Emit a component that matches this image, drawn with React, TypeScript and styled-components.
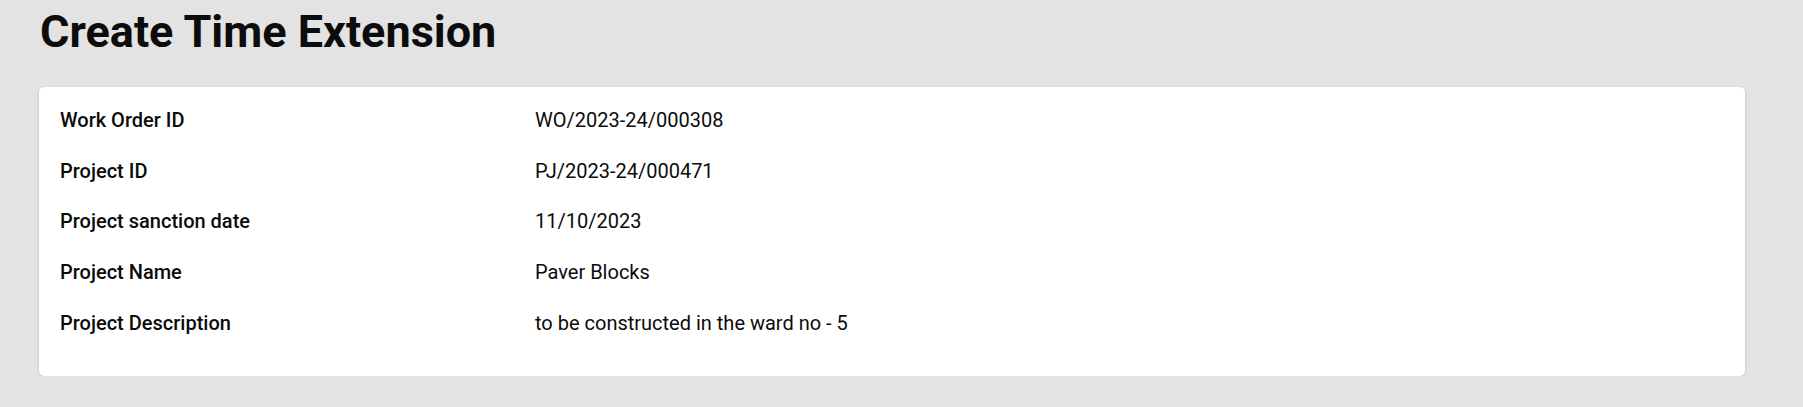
import React from "react";
import styled, { createGlobalStyle } from "styled-components";

const GlobalStyle = createGlobalStyle`
  html, body { margin: 0; padding: 0; }
  body {
    background: #e3e3e3;
    font-family: Roboto, "Noto Sans", Arial, sans-serif;
    color: #0b0b0b;
  }
`;

const Page = styled.div`
  padding: 0 58px 0 39px;
  display: flex;
  flex-direction: column;
`;

const Title = styled.h1`
  margin: 0;
  padding: 2px 0 0 1px;
  font-size: 45px;
  line-height: 60px;
  font-weight: 700;
  color: #0c0c0c;
`;

const Card = styled.section`
  margin-top: 25px;
  background: #ffffff;
  border-radius: 5px;
  box-shadow: 0 1px 3px rgba(0, 0, 0, 0.16);
  padding: 8px 21px 28px;
  display: flex;
  flex-direction: column;
`;

const Row = styled.div`
  display: grid;
  grid-template-columns: 475px 1fr;
  align-items: center;
  height: 50.6px;
`;

const Label = styled.div`
  font-size: 20px;
  font-weight: 500;
`;

const Value = styled.div`
  font-size: 20px;
  font-weight: 400;
`;

const rows: [string, string][] = [
  ["Work Order ID", "WO/2023-24/000308"],
  ["Project ID", "PJ/2023-24/000471"],
  ["Project sanction date", "11/10/2023"],
  ["Project Name", "Paver Blocks"],
  ["Project Description", "to be constructed in the ward no - 5"],
];

export default function App() {
  return (
    <>
      <GlobalStyle />
      <Page>
        <Title>Create Time Extension</Title>
        <Card>
          {rows.map(([l, v]) => (
            <Row key={l}>
              <Label>{l}</Label>
              <Value>{v}</Value>
            </Row>
          ))}
        </Card>
      </Page>
    </>
  );
}
